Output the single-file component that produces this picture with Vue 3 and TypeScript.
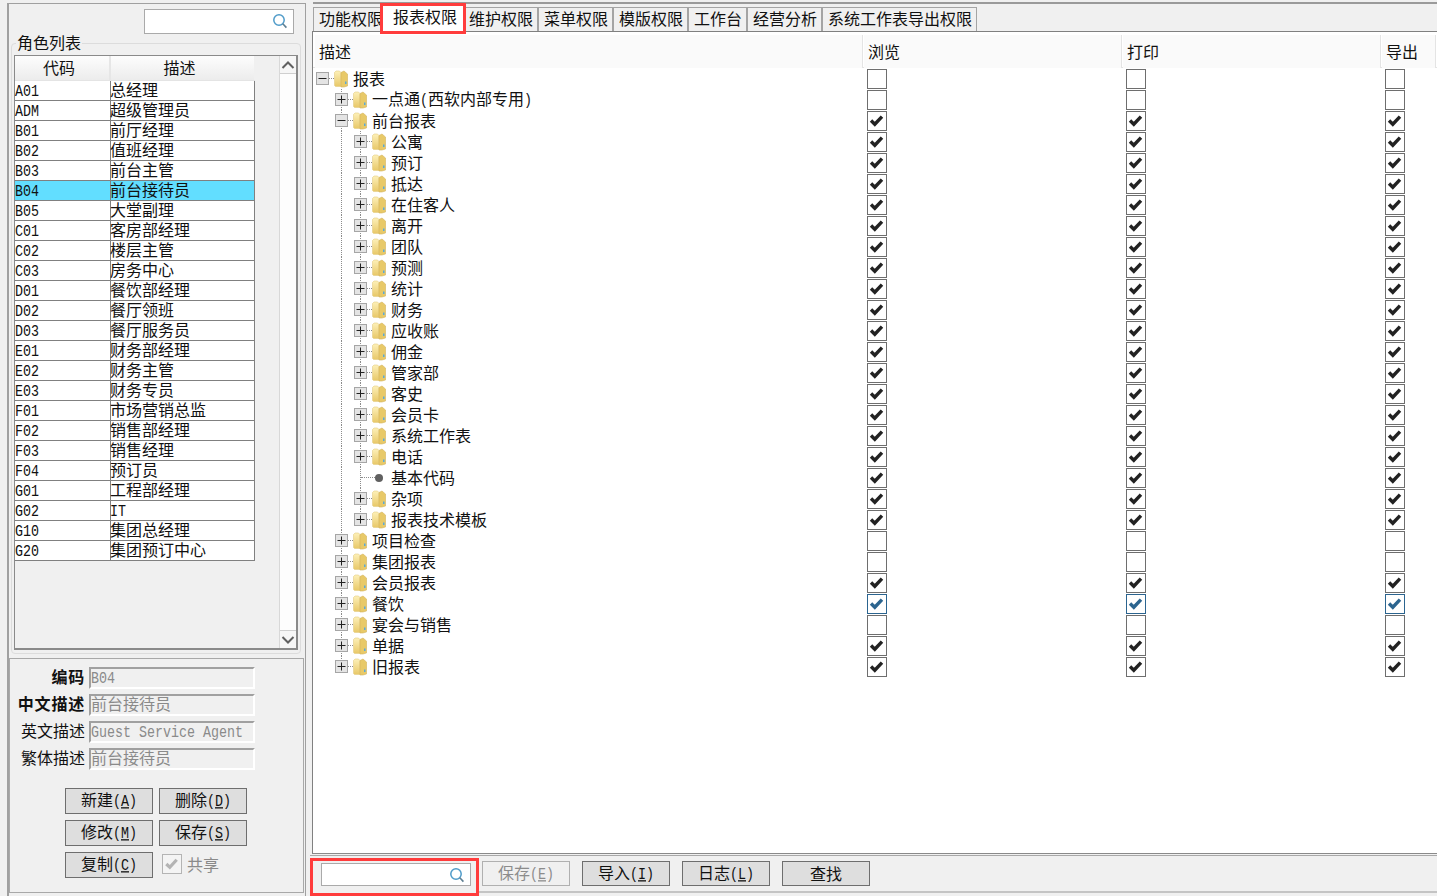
<script setup lang="ts">
interface Role { code: string; name: string; active?: boolean }
interface Node { label: string; level: number; kind: 'open' | 'closed' | 'leaf'; last?: boolean; mark: 'none' | 'on' | 'focus' }
interface Run { text: string; latin: boolean }

const roles: Role[] = [
  { code: 'A01', name: '总经理' }, { code: 'ADM', name: '超级管理员' }, { code: 'B01', name: '前厅经理' },
  { code: 'B02', name: '值班经理' }, { code: 'B03', name: '前台主管' }, { code: 'B04', name: '前台接待员', active: true },
  { code: 'B05', name: '大堂副理' }, { code: 'C01', name: '客房部经理' }, { code: 'C02', name: '楼层主管' },
  { code: 'C03', name: '房务中心' }, { code: 'D01', name: '餐饮部经理' }, { code: 'D02', name: '餐厅领班' },
  { code: 'D03', name: '餐厅服务员' }, { code: 'E01', name: '财务部经理' }, { code: 'E02', name: '财务主管' },
  { code: 'E03', name: '财务专员' }, { code: 'F01', name: '市场营销总监' }, { code: 'F02', name: '销售部经理' },
  { code: 'F03', name: '销售经理' }, { code: 'F04', name: '预订员' }, { code: 'G01', name: '工程部经理' },
  { code: 'G02', name: 'IT' }, { code: 'G10', name: '集团总经理' }, { code: 'G20', name: '集团预订中心' }
]

const fields = [
  { label: '编码', value: 'B04', bold: true },
  { label: '中文描述', value: '前台接待员', bold: true },
  { label: '英文描述', value: 'Guest Service Agent', bold: false },
  { label: '繁体描述', value: '前台接待员', bold: false }
]

const actions = [
  { label: '新建', key: 'A' }, { label: '删除', key: 'D' },
  { label: '修改', key: 'M' }, { label: '保存', key: 'S' },
  { label: '复制', key: 'C' }
]

const tabs = ['功能权限', '报表权限', '维护权限', '菜单权限', '模版权限', '工作台', '经营分析', '系统工作表导出权限']
const columns = ['描述', '浏览', '打印', '导出']

const subReports = ['公寓', '预订', '抵达', '在住客人', '离开', '团队', '预测', '统计', '财务', '应收账', '佣金', '管家部', '客史', '会员卡', '系统工作表', '电话']

const nodes: Node[] = [
  { label: '报表', level: 0, kind: 'open', mark: 'none' },
  { label: '一点通(西软内部专用)', level: 1, kind: 'closed', mark: 'none' },
  { label: '前台报表', level: 1, kind: 'open', mark: 'on' },
  ...subReports.map((label): Node => ({ label, level: 2, kind: 'closed', mark: 'on' })),
  { label: '基本代码', level: 2, kind: 'leaf', mark: 'on' },
  { label: '杂项', level: 2, kind: 'closed', mark: 'on' },
  { label: '报表技术模板', level: 2, kind: 'closed', last: true, mark: 'on' },
  { label: '项目检查', level: 1, kind: 'closed', mark: 'none' },
  { label: '集团报表', level: 1, kind: 'closed', mark: 'none' },
  { label: '会员报表', level: 1, kind: 'closed', mark: 'on' },
  { label: '餐饮', level: 1, kind: 'closed', mark: 'focus' },
  { label: '宴会与销售', level: 1, kind: 'closed', mark: 'none' },
  { label: '单据', level: 1, kind: 'closed', mark: 'on' },
  { label: '旧报表', level: 1, kind: 'closed', last: true, mark: 'on' }
]

function runs(text: string): Run[] {
  const found = text.match(/[\x20-\x7e]+|[^\x20-\x7e]+/g) ?? []
  return found.map((t) => ({ text: t, latin: /^[\x20-\x7e]/.test(t) }))
}
</script>

<template>
  <div class="app">
    <aside class="left">
      <div class="left-top">
        <div class="search search-top">
          <svg class="lens" width="16" height="16" viewBox="0 0 16 16"><circle cx="7" cy="7" r="5.2" fill="none" stroke="#4f9bc9" stroke-width="1.5" /><path d="M10.8 10.8 14.4 14.6" stroke="#5f7f92" stroke-width="1.6" /></svg>
        </div>
      </div>
      <div class="group">
        <span class="legend">角色列表</span>
        <div class="list-frame">
          <div class="table">
            <div class="thead">
              <div class="th th-code">代码</div>
              <div class="th th-name">描述</div>
            </div>
            <div v-for="r in roles" :key="r.code" class="tr" :class="{ active: r.active }">
              <div class="td td-code"><span class="lat">{{ r.code }}</span></div>
              <div class="td td-name">
                <span v-for="(p, i) in runs(r.name)" :key="i" :class="{ lat: p.latin }">{{ p.text }}</span>
              </div>
            </div>
          </div>
          <div class="scrollbar">
            <div class="sb-btn sb-up"><svg width="14" height="10" viewBox="0 0 14 10"><path d="M1.5 8 7 2.5 12.5 8" fill="none" stroke="#606060" stroke-width="2" /></svg></div>
            <div class="sb-track"></div>
            <div class="sb-btn sb-down"><svg width="14" height="10" viewBox="0 0 14 10"><path d="M1.5 2 7 7.5 12.5 2" fill="none" stroke="#606060" stroke-width="2" /></svg></div>
          </div>
        </div>
      </div>
      <div class="detail">
        <div v-for="f in fields" :key="f.label" class="field-row">
          <label class="field-label" :class="{ bold: f.bold }">{{ f.label }}</label>
          <div class="field-input">
            <span v-for="(p, i) in runs(f.value)" :key="i" :class="{ lat: p.latin }">{{ p.text }}</span>
          </div>
        </div>
        <div class="actions">
          <button v-for="a in actions" :key="a.key" class="btn" type="button">{{ a.label }}<span class="lat">(<u>{{ a.key }}</u>)</span></button>
          <div class="share">
            <span class="check check-off">
              <svg width="18" height="18" viewBox="0 0 18 18"><path d="M3.5 9.5 7.2 13 14.5 5" fill="none" stroke="#b4b4b4" stroke-width="3.4" /></svg>
            </span>
            <span>共享</span>
          </div>
        </div>
      </div>
    </aside>

    <main class="right">
      <nav class="tabs">
        <div v-for="(t, i) in tabs" :key="t" class="tab" :class="{ selected: i === 1, after: i === 2 }">{{ t }}</div>
      </nav>
      <section class="pane">
        <div class="header">
          <div v-for="c in columns" :key="c" class="hcell">{{ c }}</div>
        </div>
        <div class="tree">
          <div v-for="(n, idx) in nodes" :key="idx" class="row">
            <div class="tree-cell">
              <span v-for="g in n.level" :key="g" class="guide" :class="{ blank: g === 1 }"></span>
              <span class="node-cell" :class="{ 'no-line': n.level === 0, half: n.last }">
                <span class="hline" :class="{ 'hline-leaf': n.kind === 'leaf' }"></span>
                <span v-if="n.kind !== 'leaf'" class="expander">
                  <svg width="11" height="11" viewBox="0 0 11 11"><path v-if="n.kind === 'closed'" d="M1.5 5.5h8M5.5 1.5v8" stroke="#222" stroke-width="1" fill="none" /><path v-else d="M1.5 5.5h8" stroke="#222" stroke-width="1" fill="none" /></svg>
                </span>
              </span>
              <svg v-if="n.kind !== 'leaf'" class="folder" width="14" height="18" viewBox="0 0 14 18">
                <defs>
                  <linearGradient :id="'f' + idx" x1="0" y1="0" x2="0" y2="1"><stop offset="0" stop-color="#fdf0b8" /><stop offset="1" stop-color="#e8c868" /></linearGradient>
                </defs>
                <path d="M0.5 2.5 2 1h3.5L7 2.5V16.5H1.5L0.5 15.5Z" :fill="'url(#f' + idx + ')'" stroke="#e4cc84" stroke-width=".6" />
                <path d="M7 2.5 10 1 13.5 4V16L10 17H7Z" fill="#e8c968" stroke="#d4b45c" stroke-width=".6" />
                <path d="M11 11.5h1.5V14H11z" fill="#59a9d8" />
              </svg>
              <span v-else class="leaf-dot"></span>
              <span class="node-label">
                <span v-for="(p, i) in runs(n.label)" :key="i" :class="{ lat: p.latin }">{{ p.text }}</span>
              </span>
            </div>
            <span v-for="c in 3" :key="c" class="check" :class="{ focus: n.mark === 'focus' }">
              <svg v-if="n.mark !== 'none'" width="18" height="18" viewBox="0 0 18 18"><path d="M3.2 9 7.2 13 14.8 4.8" fill="none" stroke="currentColor" stroke-width="3.6" /></svg>
            </span>
          </div>
        </div>
      </section>
      <footer class="bar">
        <div class="red-box">
          <div class="search search-bottom">
            <svg class="lens" width="16" height="16" viewBox="0 0 16 16"><circle cx="7" cy="7" r="5.2" fill="none" stroke="#4f9bc9" stroke-width="1.5" /><path d="M10.8 10.8 14.4 14.6" stroke="#5f7f92" stroke-width="1.6" /></svg>
          </div>
        </div>
        <div class="bar-buttons">
          <button class="btn btn-bar disabled" type="button">保存<span class="lat">(<u>E</u>)</span></button>
          <button class="btn btn-bar" type="button">导入<span class="lat">(<u>I</u>)</span></button>
          <button class="btn btn-bar" type="button">日志<span class="lat">(<u>L</u>)</span></button>
          <button class="btn btn-bar" type="button">查找</button>
        </div>
      </footer>
    </main>
  </div>
</template>

<style>
html, body { margin: 0; background: #f0f0f0; }
</style>

<style scoped>
.app {
  display: flex;
  width: 1437px;
  height: 896px;
  overflow: hidden;
  background: #f0f0f0;
  color: #111;
  font: 16px/20px "Noto Sans CJK SC", sans-serif;
}
.lat {
  display: inline-block;
  font-family: "Liberation Mono", monospace;
  font-size: 13.33px;
  transform: translateY(-1px) scaleY(1.3);
  white-space: pre;
}

/* left */
.left {
  box-sizing: border-box;
  width: 299px;
  height: 893px;
  margin: 3px 0 0 7px;
  flex: none;
  display: flex;
  flex-direction: column;
  border: solid #a0a0a0;
  border-width: 1px 1px 0 2px;
}
.left-top { height: 39px; padding: 5px 10px 0 135px; box-sizing: border-box; }
.search {
  box-sizing: border-box;
  position: relative;
  background: #fff;
  border: 1px solid #aaa;
}
.search-top { width: 150px; height: 25px; }
.search-bottom { width: 150px; height: 23px; }
.lens { position: absolute; right: 5px; top: 3px; }
.group {
  box-sizing: border-box;
  position: relative;
  width: 290px;
  height: 611px;
  margin-left: 2px;
  padding: 11px 2px 0;
  border: 1px solid #dcdcdc;
  border-radius: 4px;
}
.legend {
  position: absolute;
  left: 4px;
  top: -11px;
  padding: 0 1px;
  background: #f0f0f0;
  line-height: 18px;
}
.list-frame {
  box-sizing: border-box;
  height: 595px;
  display: flex;
  border: 1px solid #8a8a8a;
  border-width: 1px 2px 2px 1px;
}
.table { width: 240px; flex: none; }
.thead { display: flex; height: 25px; box-sizing: border-box; border-bottom: 1px solid #e4e4e4; }
.th {
  box-sizing: border-box;
  text-align: center;
  line-height: 23px;
  padding-right: 6px;
  background: linear-gradient(#fdfdfd, #ececec);
  border-right: 2px solid #e6e6e6;
}
.th-code { width: 96px; }
.th-name { width: 143px; border-right: 0; }
.tr {
  display: flex;
  box-sizing: border-box;
  height: 20px;
  background: #fff;
  border-bottom: 1px solid #808080;
  border-right: 1px solid #808080;
  line-height: 17px;
}
.tr.active { background: #62deff; }
.td { white-space: nowrap; }
.td-code { width: 96px; box-sizing: border-box; border-right: 1px solid #808080; }
.td-name { flex: 1; margin-left: -1px; }
.scrollbar {
  width: 18px;
  margin-left: 24px;
  display: flex;
  flex-direction: column;
  background: #f8f8f8;
  border-left: 1px solid #d8d8d8;
}
.sb-btn { height: 17px; display: flex; align-items: center; justify-content: center; background: #f6f6f6; }
.sb-up { border-bottom: 1px solid #cfcfcf; }
.sb-down { border-top: 1px solid #cfcfcf; }
.sb-track { flex: 1; background: #fdfdfd; }

.detail {
  box-sizing: border-box;
  width: 295px;
  height: 235px;
  margin: 4px 0 0 0;
  padding: 8px 0 0 0;
  border: 1px solid #a8a8a8;
}
.field-row { display: flex; align-items: center; height: 22px; margin-bottom: 5px; }
.field-label { width: 75px; text-align: right; margin-right: 4px; line-height: 15px; padding-bottom: 4px; }
.bold { font-weight: 700; letter-spacing: 0.8px; }
.field-input {
  box-sizing: border-box;
  width: 166px;
  height: 22px;
  line-height: 15px;
  color: #8a8a8a;
  background: #f0f0f0;
  border: solid;
  border-width: 2px;
  border-color: #a0a0a0 #fff #fff #a0a0a0;
  white-space: nowrap;
}
.actions {
  display: grid;
  grid-template-columns: 88px 88px;
  grid-auto-rows: 26px;
  gap: 6px;
  margin: 18px 0 0 55px;
}
.btn {
  box-sizing: border-box;
  padding: 0;
  font: inherit;
  color: #111;
  background: #dedede;
  border: 1px solid #6e6e6e;
}
.share { display: flex; align-items: center; gap: 5px; padding: 0 0 3px 3px; color: #8a8a8a; }
.check {
  box-sizing: border-box;
  width: 20px;
  height: 20px;
  display: block;
  flex: none;
  background: #fff;
  border: 1.5px solid #6e6e6e;
  color: #222;
}
.check svg { display: block; margin: 0; width: 17px; height: 17px; }
.check-off { border-color: #b4b4b4; background: #f4f4f4; }
.check.focus { border-color: #2b648f; color: #2b648f; }

/* right */
.right {
  flex: 1;
  min-width: 0;
  height: 896px;
  display: flex;
  flex-direction: column;
  padding: 2px 0 0 4px;
  box-sizing: border-box;
}
.tabs {
  display: flex;
  flex: none;
  height: 29px;
  margin-left: 3px;
  padding-top: 3px;
  box-sizing: border-box;
  border-top: 2px solid #9a9a9a;
  align-items: flex-start;
}
.tab {
  box-sizing: border-box;
  height: 24px;
  padding: 0 5px;
  line-height: 21px;
  white-space: nowrap;
  background: #f0f0f0;
  border: solid #a4a4a4;
  border-width: 1px 0 0 1px;
  box-shadow: inset -1px 0 0 #a4a4a4;
}
.tab.selected {
  position: relative;
  z-index: 1;
  height: 31px;
  width: 86px;
  margin: -4px 0 0 -8px;
  padding: 0 0 0 10px;
  background: #fff;
  line-height: 21px;
  border: 3px solid #ff3c3c;
  box-shadow: none;
}
.tab.after { margin-left: -3px; }
.pane {
  flex: 1;
  min-height: 0;
  margin-left: 2px;
  box-sizing: border-box;
  background: #fff;
  border: 1px solid #808080;
  border-bottom: 1px solid #8a8a8a;
  border-right: 0;
  padding-top: 3px;
}
.header {
  display: grid;
  grid-template-columns: 549px 259px 259px 1fr;
  padding-left: 2px;
  height: 33px;
  box-sizing: border-box;
  border-bottom: 1px solid #e4e4e4;
}
.hcell {
  margin-right: 2px;
  padding-left: 4px;
  line-height: 33px;
  background: #fafafa;
  box-shadow: 1px 0 0 #e4e4e4;
}
.row {
  display: grid;
  grid-template-columns: 554px 259px 259px 1fr;
  height: 21px;
  align-items: center;
}
.tree-cell { display: flex; align-items: center; height: 21px; }
.guide, .node-cell {
  position: relative;
  width: 19px;
  height: 21px;
  flex: none;
}
.guide::before, .node-cell::before {
  content: "";
  position: absolute;
  left: 9px;
  top: 0;
  bottom: 0;
  border-left: 1px dotted #8c8c8c;
}
.guide.blank::before, .node-cell.no-line::before { display: none; }
.node-cell.half::before { bottom: 10px; }
.hline {
  position: absolute;
  left: 10px;
  right: -2px;
  top: 10px;
  border-top: 1px dotted #8c8c8c;
}
.hline-leaf { right: -5px; }
.expander {
  box-sizing: border-box;
  position: absolute;
  left: 3px;
  top: 4px;
  width: 13px;
  height: 13px;
  background: #e4e4e4;
  border: 1px solid #a6a6a6;
}
.expander svg { display: block; }
.folder { flex: none; margin: 0 5px 0 2px; }
.leaf-dot {
  width: 8px;
  height: 8px;
  flex: none;
  margin: 0 8px 0 5px;
  border-radius: 50%;
  background: #606060;
}
.node-label { white-space: nowrap; line-height: 21px; }

/* bottom bar */
.bar {
  flex: none;
  height: 41px;
  display: flex;
  box-sizing: border-box;
  margin-top: 1px;
  border-top: 1px solid #a8a8a8;
}
.red-box {
  box-sizing: border-box;
  width: 169px;
  height: 38px;
  margin-top: 2px;
  padding: 2px 0 0 8px;
  border: 3px solid #ff3c3c;
  flex: none;
}
.bar-buttons {
  flex: 1;
  display: flex;
  gap: 12px;
  box-sizing: border-box;
  height: 37px;
  padding: 5px 0 0 3px;
  border-bottom: 2px solid #c4c4c4;
}
.btn-bar { width: 88px; height: 25px; padding-bottom: 2px; }
.btn.disabled { background: #f0f0f0; color: #8c8c8c; border-color: #b0b0b0; }
</style>
